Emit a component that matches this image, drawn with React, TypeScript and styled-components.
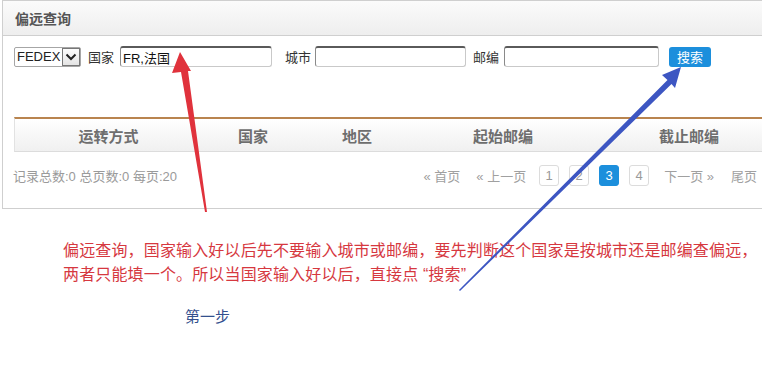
import React from "react";
import styled, { createGlobalStyle } from "styled-components";

const GlobalStyle = createGlobalStyle`
  html, body {
    margin: 0;
    padding: 0;
    background: #ffffff;
    overflow: hidden;
  }
  body {
    font-family: "Liberation Sans", "Noto Sans CJK SC", Arial, sans-serif;
  }
`;

const Page = styled.div`
  position: relative;
  width: 762px;
  height: 384px;
  overflow: hidden;
  background: #fff;
`;

const Panel = styled.section`
  margin-left: 2px;
  width: 790px;
  border: 1px solid #cfcfcf;
  border-right: none;
  background: #fff;
`;

const PanelHeader = styled.header`
  height: 34px;
  display: flex;
  align-items: center;
  padding-left: 12px;
  background: linear-gradient(#fbfbfb, #eeeeee);
  border-bottom: 1px solid #cfcfcf;
`;

const Title = styled.h2`
  margin: 0;
  font-size: 14px;
  font-weight: 700;
  color: #555;
  font-family: "Noto Sans CJK SC", sans-serif;
`;

const PanelBody = styled.div`
  padding: 10px 11px 0 11px;
`;

const FormRow = styled.div`
  display: flex;
  align-items: center;
  height: 21px;
`;

const SelectBox = styled.div`
  display: flex;
  align-items: center;
  width: 67px;
  height: 20px;
  box-sizing: border-box;
  border: 1px solid #a6a6a6;
  border-radius: 2px;
  padding-left: 2px;
  font-size: 13px;
  color: #222;
  background: #fff;
`;

const SelectText = styled.span`
  flex: 1;
`;

const ArrowBox = styled.span`
  width: 18px;
  height: 18px;
  box-sizing: border-box;
  border: 1px solid #777;
  background: linear-gradient(#fdfdfd, #e4e4e4);
  display: flex;
  align-items: center;
  justify-content: center;
`;

const Label = styled.label<{ $ml: number }>`
  margin-left: ${(p) => p.$ml}px;
  font-size: 13px;
  color: #333;
  font-family: "Noto Sans CJK SC", sans-serif;
`;

const TextInput = styled.input<{ $ml: number; $w: number }>`
  margin-left: ${(p) => p.$ml}px;
  width: ${(p) => p.$w}px;
  height: 21px;
  box-sizing: border-box;
  border: 1px solid #c9c9c9;
  border-top: 2px solid #5a5a5a;
  border-left-color: #8a8a8a;
  border-radius: 3px;
  padding: 0 2px;
  font-size: 13px;
  color: #111;
  font-family: "Liberation Sans", "Noto Sans CJK SC", sans-serif;
  outline: none;
  background: #fff;
`;

const SearchButton = styled.button`
  margin-left: 10px;
  width: 42px;
  height: 20px;
  border: none;
  border-radius: 3px;
  background: #1c8fdc;
  color: #fff;
  font-size: 13px;
  font-family: "Noto Sans CJK SC", sans-serif;
  padding: 0;
  line-height: 20px;
`;

const Table = styled.div`
  margin-top: 50px;
  border-top: 2px solid #b9844f;
  border-bottom: 1px solid #dcdcdc;
  border-left: 1px solid #e2e2e2;
`;

const HeaderRow = styled.div`
  display: grid;
  grid-template-columns: 187px 102px 106px 186px 186px;
  height: 32px;
  background: linear-gradient(#ffffff, #f0f0f0);
`;

const HeadCell = styled.div`
  display: flex;
  align-items: center;
  justify-content: center;
  font-size: 15px;
  font-weight: 700;
  color: #6e6e6e;
  font-family: "Noto Sans CJK SC", sans-serif;
`;

const Footer = styled.div`
  display: flex;
  align-items: center;
  height: 21px;
  padding: 13px 0 22px 0;
  margin-left: -1px;
`;

const Summary = styled.span`
  font-size: 13px;
  color: #9a9a9a;
  font-family: "Liberation Sans", "Noto Sans CJK SC", sans-serif;
`;

const Pager = styled.nav`
  margin-left: auto;
  margin-right: 25px;
  display: flex;
  align-items: center;
  gap: 10px;
`;

const PageLink = styled.span<{ $mr?: number; $ml?: number }>`
  font-size: 13px;
  color: #a0a0a0;
  margin-right: ${(p) => p.$mr ?? 0}px;
  margin-left: ${(p) => p.$ml ?? 0}px;
  font-family: "Liberation Sans", "Noto Sans CJK SC", sans-serif;
  white-space: pre;
`;

const PageNum = styled.span<{ $active?: boolean }>`
  width: 20px;
  height: 21px;
  box-sizing: border-box;
  display: flex;
  align-items: center;
  justify-content: center;
  border: 1px solid ${(p) => (p.$active ? "#1c8fdc" : "#dcdcdc")};
  border-radius: 3px;
  background: ${(p) => (p.$active ? "#1c8fdc" : "#fff")};
  color: ${(p) => (p.$active ? "#fff" : "#9a9a9a")};
  font-size: 13px;
  font-family: "Liberation Sans", sans-serif;
`;

const Note = styled.p`
  margin: 30px 0 0 63px;
  font-size: 16px;
  line-height: 24px;
  letter-spacing: 0.15px;
  color: #d6383f;
  font-family: "Liberation Sans", "Noto Sans CJK SC", sans-serif;
`;

const Step = styled.p`
  margin: 19px 0 0 185px;
  font-size: 15px;
  line-height: 20px;
  color: #33508e;
  font-family: "Noto Sans CJK SC", sans-serif;
`;

const Overlay = styled.svg`
  position: absolute;
  left: 0;
  top: 0;
  pointer-events: none;
`;

const Chevron = () => (
  <svg width="12" height="8" viewBox="0 0 12 8">
    <path d="M1.5 1.5 L6 6 L10.5 1.5" fill="none" stroke="#222" strokeWidth="2" />
  </svg>
);

export default function App() {
  return (
    <Page>
      <GlobalStyle />
      <Panel>
        <PanelHeader>
          <Title>偏远查询</Title>
        </PanelHeader>
        <PanelBody>
          <FormRow>
            <SelectBox>
              <SelectText>FEDEX</SelectText>
              <ArrowBox>
                <Chevron />
              </ArrowBox>
            </SelectBox>
            <Label $ml={7}>国家</Label>
            <TextInput $ml={6} $w={152} defaultValue="FR,法国" />
            <Label $ml={13}>城市</Label>
            <TextInput $ml={4} $w={151} />
            <Label $ml={7}>邮编</Label>
            <TextInput $ml={5} $w={155} />
            <SearchButton>搜索</SearchButton>
          </FormRow>
          <Table>
            <HeaderRow>
              <HeadCell>运转方式</HeadCell>
              <HeadCell>国家</HeadCell>
              <HeadCell>地区</HeadCell>
              <HeadCell>起始邮编</HeadCell>
              <HeadCell>截止邮编</HeadCell>
            </HeaderRow>
          </Table>
          <Footer>
            <Summary>记录总数:0 总页数:0 每页:20</Summary>
            <Pager>
              <PageLink $mr={6}>« 首页</PageLink>
              <PageLink $mr={3}>« 上一页</PageLink>
              <PageNum>1</PageNum>
              <PageNum>2</PageNum>
              <PageNum $active>3</PageNum>
              <PageNum>4</PageNum>
              <PageLink $ml={5} $mr={7}>下一页 »</PageLink>
              <PageLink>尾页</PageLink>
            </Pager>
          </Footer>
        </PanelBody>
      </Panel>
      <Note>
        偏远查询，国家输入好以后先不要输入城市或邮编，要先判断这个国家是按城市还是邮编查偏远，
        <br />
        两者只能填一个。所以当国家输入好以后，直接点 “搜索”
      </Note>
      <Step>第一步</Step>
      <Overlay width="762" height="384" viewBox="0 0 762 384">
        <polygon
          points="180,52 191,71 188,71 207,212 205,212 181,72 172,73"
          fill="#e0323c"
        />
        <polygon
          points="681,67 675,88 671.5,84 460,291 459,290 667.5,80 662,75"
          fill="#3d56c2"
        />
      </Overlay>
    </Page>
  );
}
